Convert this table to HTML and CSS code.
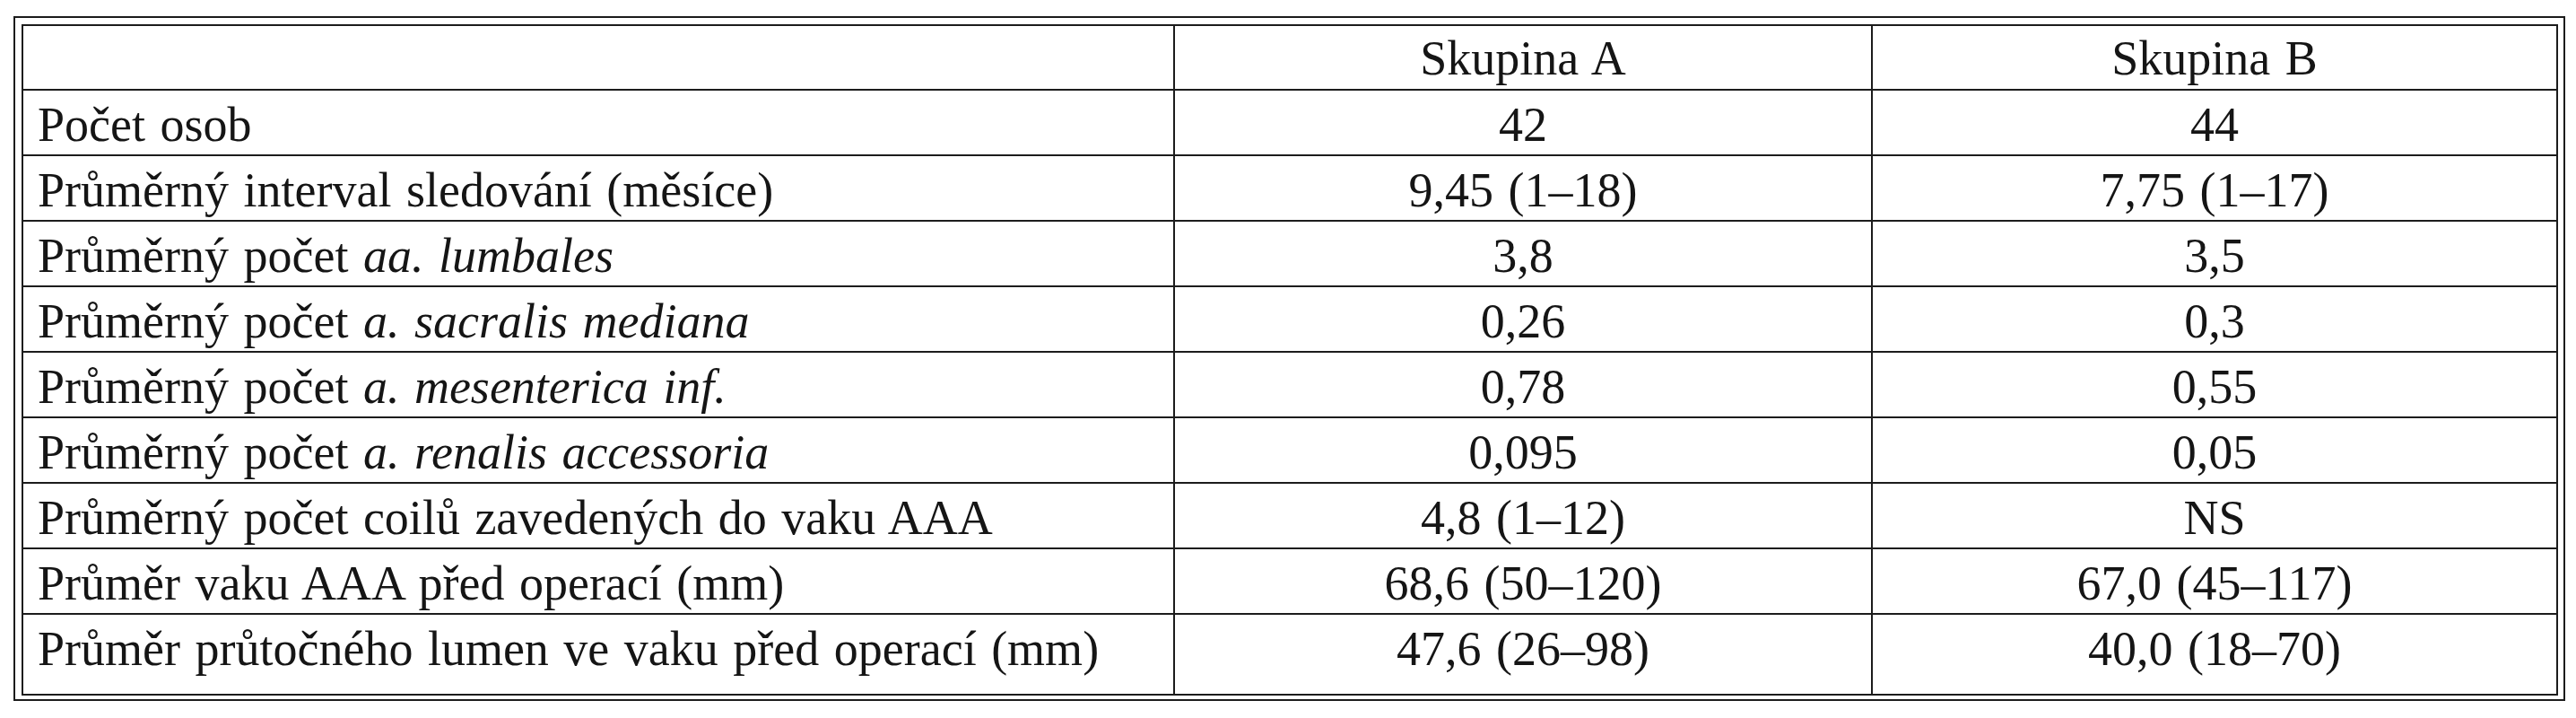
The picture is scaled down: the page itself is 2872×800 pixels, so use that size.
FILE: index.html
```html
<!DOCTYPE html>
<html lang="cs">
<head>
<meta charset="utf-8">
<title>Tabulka</title>
<link rel="stylesheet" href="styles.css">
</head>
<body>
<div class="frame">
  <table class="data">
    <thead>
      <tr>
        <th class="c1"></th>
        <th class="c2">Skupina A</th>
        <th class="c3">Skupina B</th>
      </tr>
    </thead>
    <tbody>
      <tr><td>Počet osob</td><td>42</td><td>44</td></tr>
      <tr><td>Průměrný interval sledování (měsíce)</td><td>9,45 (1–18)</td><td>7,75 (1–17)</td></tr>
      <tr><td>Průměrný počet <i>aa. lumbales</i></td><td>3,8</td><td>3,5</td></tr>
      <tr><td>Průměrný počet <i>a. sacralis mediana</i></td><td>0,26</td><td>0,3</td></tr>
      <tr><td>Průměrný počet <i>a. mesenterica inf.</i></td><td>0,78</td><td>0,55</td></tr>
      <tr><td>Průměrný počet <i>a. renalis accessoria</i></td><td>0,095</td><td>0,05</td></tr>
      <tr><td>Průměrný počet coilů zavedených do vaku AAA</td><td>4,8 (1–12)</td><td>NS</td></tr>
      <tr><td>Průměr vaku AAA před operací (mm)</td><td>68,6 (50–120)</td><td>67,0 (45–117)</td></tr>
      <tr class="last"><td>Průměr průtočného lumen ve vaku před operací (mm)</td><td>47,6 (26–98)</td><td>40,0 (18–70)</td></tr>
    </tbody>
  </table>
</div>
</body>
</html>
```
FILE: styles.css
```css
html, body {
  margin: 0;
  padding: 0;
  background: #ffffff;
}

body {
  font-family: "Liberation Serif", "Times New Roman", serif;
  color: #151515;
}

.frame {
  box-sizing: border-box;
  width: 2845px;
  margin: 18px 0 0 15px;
  padding: 7px 6px 4px 7px;
  border: 2px solid #1c1c1c;
}

.data {
  box-sizing: border-box;
  width: 2828px;
  table-layout: fixed;
  border-collapse: separate;
  border-spacing: 0;
  border: 2px solid #1c1c1c;
  font-size: 54px;
  line-height: 60px;
  word-spacing: 3px;
}

.data th,
.data td {
  box-sizing: border-box;
  padding: 8px 16px 3px 16px;
  font-weight: normal;
  text-align: center;
  white-space: nowrap;
  border-right: 2px solid #1c1c1c;
  border-bottom: 2px solid #1c1c1c;
}

.data th {
  padding-top: 6px;
  padding-bottom: 4px;
}

.data th:last-child,
.data td:last-child {
  border-right: none;
}

.data td:first-child {
  text-align: left;
}

.data .c1 {
  width: 1284px;
}

.data .c2 {
  width: 778px;
}

.data tr.last td {
  border-bottom: none;
  padding-bottom: 20px;
}

.data i {
  font-style: italic;
}
```
